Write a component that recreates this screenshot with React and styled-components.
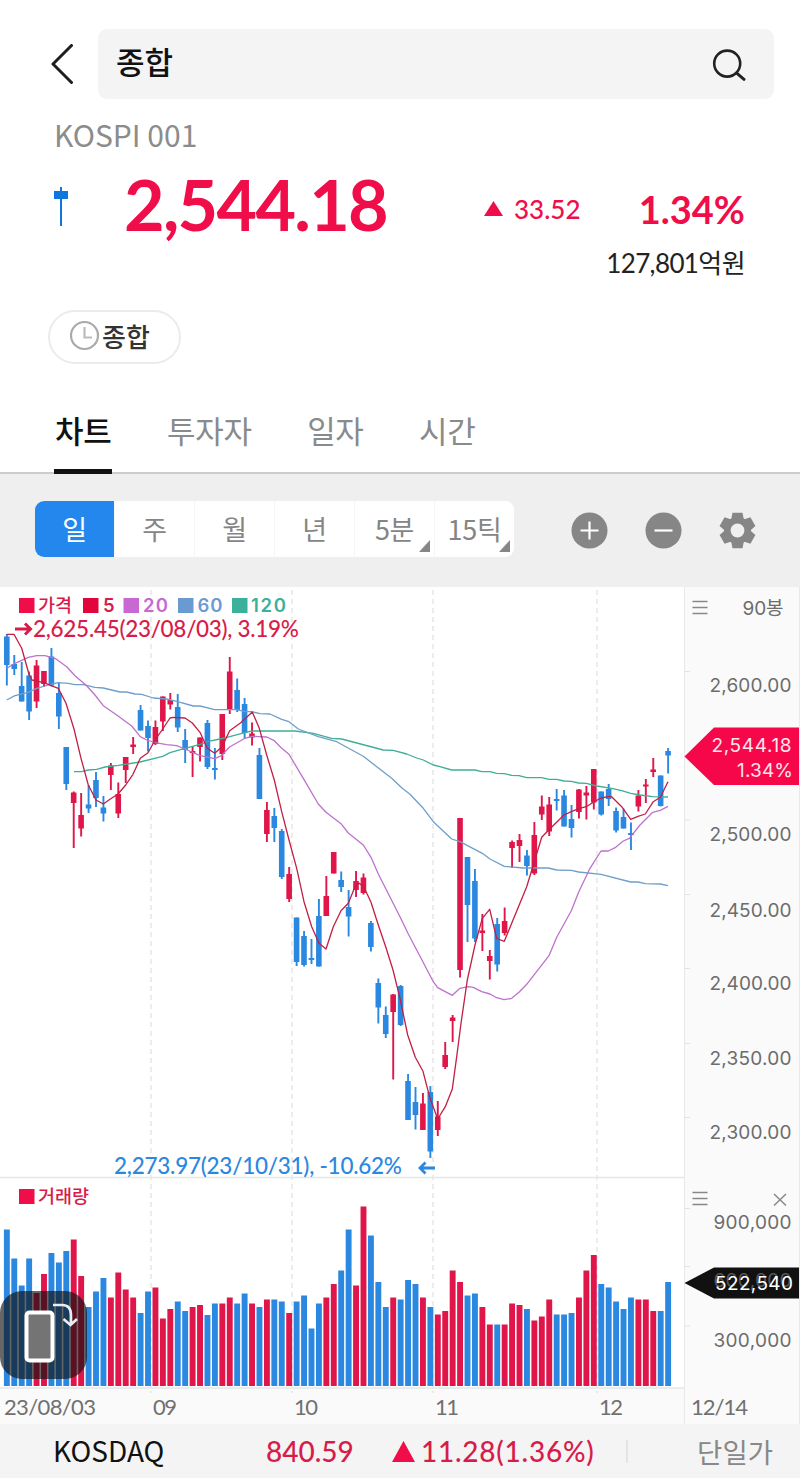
import React from "react";
import styled, { createGlobalStyle } from "styled-components";

const RED = "#ef0e4a";
const BLUE = "#2b88e0";
const KR = `"Noto Sans CJK KR", sans-serif`;
const LATO = `Lato, "Noto Sans CJK KR", sans-serif`;
const INTER = `Inter, "Noto Sans CJK KR", sans-serif`;

// r/b, high, body top, body bottom, low, top of the volume bar
const candles = [
  ["b", 634, 636.5, 665, 685.5, 1229.5],
  ["b", 655, 664, 669, 675, 1258.5],
  ["b", 662, 686, 701.5, 701.5, 1285.5],
  ["b", 671.5, 675.5, 711.5, 720, 1258.5],
  ["r", 660, 665.5, 701.5, 708, 1293],
  ["r", 671, 671, 684, 687, 1274],
  ["b", 648, 656.5, 685.5, 686.5, 1253],
  ["b", 683, 693, 716.5, 729, 1262.5],
  ["b", 747, 747, 784, 790, 1251],
  ["r", 791.5, 792.5, 803, 848, 1239.5],
  ["r", 793, 815, 828.5, 836.5, 1276],
  ["b", 785, 804.5, 808.5, 813, 1307],
  ["b", 772, 780, 798, 807, 1291.5],
  ["b", 796, 807.5, 813.5, 821.5, 1278],
  ["r", 763, 765.5, 775, 790, 1297.5],
  ["r", 782.5, 794, 813.5, 818, 1272.5],
  ["r", 757, 757, 770, 783, 1289.5],
  ["r", 737, 744.5, 747, 754, 1297.5],
  ["b", 705, 710, 730.5, 730.5, 1313],
  ["b", 720.5, 726, 738, 751.5, 1291.5],
  ["r", 720.5, 727, 744, 745, 1287.5],
  ["r", 696.5, 696.5, 721.5, 731, 1318.5],
  ["r", 693, 700, 704.5, 709.5, 1309],
  ["b", 694, 707, 727.5, 732, 1301.5],
  ["b", 729, 740, 750, 763, 1311],
  ["r", 746, 751, 753, 777, 1307],
  ["r", 737.5, 737.5, 747, 761.5, 1305],
  ["b", 720, 723, 767, 769, 1315],
  ["b", 748, 768, 770, 779.5, 1303.5],
  ["r", 714, 714, 754, 760, 1303.5],
  ["r", 657, 671.5, 710, 714, 1297.5],
  ["b", 678.5, 690, 710, 712, 1303.5],
  ["b", 698, 704, 733, 738.5, 1293.5],
  ["r", 722.5, 733.5, 737.5, 745.5, 1303.5],
  ["b", 748, 755, 799, 799, 1307],
  ["r", 802, 810, 834, 842, 1299.5],
  ["b", 808, 816, 828, 842, 1299.5],
  ["b", 829, 831, 877, 879, 1301.5],
  ["r", 867, 874, 899, 902, 1313],
  ["b", 917.5, 917.5, 962, 966, 1301.5],
  ["b", 931, 936, 965, 966.5, 1295.5],
  ["b", 939, 958, 960, 964, 1328.5],
  ["b", 899, 916, 966.5, 966.5, 1303.5],
  ["r", 876, 896, 916, 916, 1297.5],
  ["r", 852, 852, 873.5, 873.5, 1284],
  ["b", 871.5, 880, 887, 892, 1270.5],
  ["b", 890, 907, 916.5, 936.5, 1229.5],
  ["r", 871, 881, 890, 897, 1285.5],
  ["r", 873.5, 877.5, 893, 894.5, 1206.5],
  ["b", 921, 923, 947, 951.5, 1235.5],
  ["b", 978.5, 983, 1007.5, 1023.5, 1282],
  ["b", 1006.5, 1015, 1034, 1038, 1307],
  ["r", 994, 994.5, 1012, 1079.5, 1297.5],
  ["b", 985, 986, 1025, 1026, 1299.5],
  ["b", 1074, 1081, 1120, 1120, 1280],
  ["b", 1087, 1102, 1115, 1129.5, 1284],
  ["r", 1093, 1103.5, 1130, 1130, 1297.5],
  ["b", 1086, 1092, 1151.5, 1158, 1307],
  ["r", 1101, 1116.5, 1130, 1136, 1314.5],
  ["r", 1042, 1055, 1067, 1069, 1311],
  ["r", 1015, 1017.5, 1021, 1042, 1270.5],
  ["r", 818, 818, 970, 977.5, 1282],
  ["b", 857, 857, 905, 942, 1295.5],
  ["b", 869, 881, 938.5, 942, 1293.5],
  ["r", 914, 930.5, 933, 951, 1307],
  ["r", 950, 956, 961, 979.5, 1324.5],
  ["b", 918, 924, 964.5, 971.5, 1324.5],
  ["r", 907.5, 921, 933, 935.5, 1324.5],
  ["r", 840.5, 842, 848, 868, 1303.5],
  ["r", 834, 840, 846, 862, 1305],
  ["b", 850, 855.5, 866, 875.5, 1309],
  ["r", 822, 835, 873.5, 875, 1320.5],
  ["r", 795.5, 806.5, 814.5, 820, 1316.5],
  ["r", 797, 804.5, 831.5, 836, 1299.5],
  ["b", 789, 799, 801, 810.5, 1314.5],
  ["b", 790, 795.5, 826.5, 826.5, 1314.5],
  ["b", 805, 819, 828, 837.5, 1313],
  ["r", 789, 789.5, 812, 818.5, 1297.5],
  ["r", 786, 792.5, 795.5, 819.5, 1270.5],
  ["r", 769, 769, 802.5, 809.5, 1255],
  ["b", 791.5, 791.5, 814.5, 815.5, 1284],
  ["b", 784, 789, 799, 806, 1287.5],
  ["b", 807.5, 811, 830.5, 832.5, 1301.5],
  ["b", 808.5, 817, 828.5, 828.5, 1309],
  ["b", 822.5, 833, 835, 850, 1297.5],
  ["r", 790, 795.5, 806.5, 811.5, 1299.5],
  ["r", 779, 784.5, 786.5, 803, 1299.5],
  ["r", 758, 769.5, 772, 777, 1311],
  ["b", 775.5, 775.5, 806, 806.5, 1311],
  ["b", 748, 751, 755.5, 773.5, 1282],
];

const averages = [
  {
    color: "#3fae97",
    points:
      "74,771.7 81.7,771.7 88.3,770 96.7,769.3 105,767 118.3,765.3 140,762 162.7,756.3 170,752.7 185,748.3 200,744.3 208.3,741.3 220,739 229.7,736.7 245,732.7 251.7,731 295,731 313.3,733.3 331.7,738.3 341.7,739 383.3,750 393.3,750.3 406.7,754 416.7,758 423.3,760 433.3,765 440,766.7 451.7,770 475,770 481.7,771.7 490,771.7 496.7,773.3 504.3,773.7 511.7,775.3 519,775.7 526.7,777.7 541.7,777.7 549,779.3 556.7,779.3 564,781 571.3,781.3 578.7,783 586.3,783.3 596.7,786 611.7,788.3 621.7,790.7 630.7,793.3 640,795 652.7,796.7 668,797",
  },
  {
    color: "#6f9fc9",
    points:
      "6.7,700 15,695.7 28.3,692.3 36.7,688.3 51.7,684 58.3,682.7 68.3,683.3 75,684.7 83.3,684.7 95,687.3 103.3,688 120,692 126.7,692 135,694 141.7,694.3 153.3,698 166.7,699 176.7,701.3 193.3,706 200,706 214.7,709.7 236.7,709.7 245,711.7 251.7,711.7 260,713.7 270,714 281.7,719.3 289,721.7 298.3,729 318.3,736.7 336.7,741.7 363.3,756.3 391.7,778.3 401.7,787.7 410,794.3 423.3,808.3 433.3,821.7 440,828 451.7,839 460,841.7 482.3,853.3 490,859 504.3,866.3 523.3,868 548.3,868 556.7,870 571.3,870.3 578.7,872 601,874.3 630.7,882 638,882 645.3,883.7 660.3,884 668,885.7",
  },
  {
    color: "#bd72cb",
    points:
      "6.7,668.3 15,663.3 28.3,657.3 36.7,655.7 45,655.7 55,658.3 66.7,666.7 75,675.7 86.7,685.7 95,695 103.3,705.7 116.7,715 131.7,726 140.3,736.7 146.7,740 155.3,742.7 166.7,744.7 176.7,745.7 185,749 200,755.7 214.7,758.7 222,755.3 229.5,747 245,738.3 251.7,736.3 266.7,737 274.3,740.7 281.7,748.3 289,754.3 303.3,778.3 318.3,804 326,812.3 341,823.7 348.3,833 363.3,845 371,857.3 378.3,874 400,916.7 408.3,934 416.7,950 433.3,981.7 437.7,987.7 452.3,995.3 460,988.3 468.3,986.7 473.3,987.3 481.7,991.7 490,994 496.7,997.7 504,999.7 511.7,998.3 519,992.3 526.7,984.3 549,955.7 556.7,937.3 571.3,910.7 578.7,892 590,868.3 601,851 608.3,851 615.7,847.3 623.3,841 629.3,838.3 640,825 652.7,812.3 660.3,810.3 668,806.3",
  },
  {
    color: "#c11f45",
    points:
      "6.7,634.3 14,634.3 21.7,648.3 29,674.3 32,680 43.7,682.7 58.3,688.3 66,703.3 74,729 81,758.3 88.3,785 96,800 103.3,804 110,799.3 118,794 125.7,785 133,774.3 140.3,758.3 148,752.7 155.3,739.7 162.7,729 170,718 173.3,717.3 185,718 192.3,723 200,732.3 207.3,748.3 214.7,753.3 222,746.7 229.7,730.7 240.7,722.7 252.3,712 259.3,728.3 266.7,755 274.3,780 281.7,811.7 289,840 296.7,868.3 304,901.7 311.7,926.7 319,943.3 326,949 333.3,926.7 341,910.7 348.3,903.3 355.7,885 359.3,883.3 364,887.3 371,902.3 378.3,925 385.7,946.7 393,970 400,998.3 407.7,1035 415.3,1057.3 423,1071.3 430,1098.3 437.7,1119 445.3,1106.7 452.3,1089 456.7,1056.7 461,1023.3 467.3,980 475,945 482.3,918.3 489.7,909.3 496.7,938.5 504.3,941.3 511.7,923.3 526.7,886.7 534.3,861.7 541.7,837.3 549,829.7 564,815 571.3,811.7 578.7,808.7 586.3,806.7 593.7,802 601,798 608.3,796.7 611.7,796.7 621.7,806.7 630.7,819.3 638,816.3 645.3,814 653.3,801.7 660.3,797.3 668,781.7",
  },
];

const months = [
  { x: 151, label: "09" },
  { x: 292, label: "10" },
  { x: 433, label: "11" },
  { x: 597, label: "12" },
];

const priceTicks = [
  [685, "2,600.00"],
  [834, "2,500.00"],
  [909.5, "2,450.00"],
  [983, "2,400.00"],
  [1058, "2,350.00"],
  [1132, "2,300.00"],
];

const legend = [
  { label: "가격", color: RED, text: "#d81c4a", x: 19, tx: 38, width: 34 },
  { label: "5", color: "#e2043b", text: "#d81c4a", x: 83, tx: 103, width: 12 },
  { label: "20", color: "#c768d3", text: "#c768d3", x: 123.5, tx: 143, width: 25 },
  { label: "60", color: "#6a9bd0", text: "#6a9bd0", x: 178, tx: 197.5, width: 25 },
  { label: "120", color: "#3bb09b", text: "#3bb09b", x: 232, tx: 251, width: 35 },
];

const GlobalStyle = createGlobalStyle`
  * {
    box-sizing: border-box;
  }
  body {
    margin: 0;
    background: #fff;
    font-family: ${KR};
  }
  button {
    border: 0;
    padding: 0;
    background: none;
    font: inherit;
    color: inherit;
  }
  svg {
    display: block;
    flex: none;
  }
`;

const Page = styled.div`
  width: 800px;
  height: 1478px;
  display: flex;
  flex-direction: column;
  overflow: hidden;
  background: #fff;
`;

const TopBar = styled.header`
  display: flex;
  align-items: center;
  gap: 24px;
  padding: 29px 26px 0 50px;
`;

const SearchBox = styled.div`
  flex: 1;
  height: 70px;
  display: flex;
  align-items: center;
  justify-content: space-between;
  padding: 0 26px 2px 18px;
  border-radius: 9px;
  background: #f4f4f4;
`;

const Keyword = styled.span`
  padding-bottom: 5px;
  font-size: 31px;
  font-weight: 500;
  color: #111;
`;

const Code = styled.div`
  height: 74px;
  padding-left: 54px;
  line-height: 70px;
  font-size: 30px;
  font-weight: 400;
  color: #8c8c8c;
`;

const Quote = styled.section`
  display: flex;
  align-items: center;
  height: 67px;
  padding: 0 55px 0 52px;
  color: ${RED};
  font-family: ${LATO};
`;

const Price = styled.div`
  width: 360px;
  margin-left: 54px;
  padding-bottom: 5px;
  font-size: 70px;
  font-weight: 700;
  letter-spacing: -1.7px;
  line-height: 62px;
`;

const Change = styled.div`
  display: flex;
  align-items: center;
  gap: 11px;
  padding-top: 5px;
  font-size: 26px;
  font-weight: 500;
`;

const Rate = styled.div`
  margin-left: auto;
  padding-top: 4px;
  font-size: 38px;
  font-weight: 700;
`;

const Amount = styled.div`
  height: 69px;
  padding: 5px 55px 0 0;
  text-align: right;
  line-height: 36px;
  font-family: ${LATO};
  font-size: 26px;
  letter-spacing: -0.6px;
  color: #222;
`;

const Chip = styled.button`
  width: 133px;
  height: 54px;
  margin: 1px 0 0 48px;
  display: flex;
  align-items: center;
  padding: 0 0 3px 19px;
  gap: 2px;
  border: 2px solid #ebebeb;
  border-radius: 27px;
  font-size: 26px;
  font-weight: 500;
  color: #333;
`;

const Tabs = styled.nav`
  display: flex;
  gap: 53.5px;
  height: 110px;
  padding: 0 54px;
  border-bottom: 2px solid #ccc;
`;

const Tab = styled.button`
  height: 110px;
  padding: 25px 1px 0;
  font-size: 31px;
  letter-spacing: -0.3px;
  font-weight: ${(p) => (p.$active ? 500 : 400)};
  color: ${(p) => (p.$active ? "#111" : "#8a8a8a")};
  border-bottom: 5px solid ${(p) => (p.$active ? "#111" : "transparent")};
`;

const Toolbar = styled.div`
  display: flex;
  align-items: flex-start;
  height: 113px;
  padding: 27px 43px 0 35px;
  background: #efefef;
`;

const Periods = styled.div`
  display: flex;
  width: 479px;
  height: 56px;
  border-radius: 9px;
  overflow: hidden;
  background: #fff;
`;

const Period = styled.button`
  position: relative;
  flex: 1;
  padding-bottom: 1px;
  font-size: 27px;
  letter-spacing: -0.3px;
  color: ${(p) => (p.$active ? "#fff" : "#858585")};
  background: ${(p) => (p.$active ? "#2387ee" : "#fff")};
  border-left: ${(p) => (p.$active ? 0 : "1px solid #f5f5f5")};
  ${(p) =>
    p.$more &&
    `&::after {
      content: "";
      position: absolute;
      right: 4px;
      bottom: 5px;
      border-left: 11px solid transparent;
      border-bottom: 12px solid #868686;
    }`}
`;

const Tools = styled.div`
  display: flex;
  gap: 37px;
  margin: 11px 0 0 57px;
`;

const ChartArea = styled.section`
  position: relative;
  display: flex;
  height: 837px;
`;

const RotateButton = styled.button`
  position: absolute;
  left: 0;
  top: 704px;
  width: 87px;
  height: 88px;
  border-radius: 22px;
  background: rgba(16, 16, 16, 0.64);
`;

const Footer = styled.footer`
  display: flex;
  align-items: center;
  height: 54px;
  padding: 0 27px 0 53px;
  background: #f4f4f4;
  font-family: ${LATO};
  font-size: 28px;
  font-weight: 500;
  color: #d81c4a;
`;

const Market = styled.span`
  width: 213px;
  padding-bottom: 2px;
  font-family: ${KR};
  font-size: 28px;
  font-weight: 400;
  color: #111;
`;

const Index = styled.span`
  width: 126px;
`;

const Diff = styled.span`
  width: 236px;
  height: 23px;
  display: flex;
  align-items: center;
  gap: 6px;
  letter-spacing: 0.75px;
  border-right: 2px solid #e4e4e4;
`;

const Single = styled.span`
  margin-left: auto;
  font-family: ${KR};
  font-size: 27.5px;
  font-weight: 400;
  color: #888;
`;

const barX = (i) => 6.8 + i * 7.43;

const Plot = () => (
  <svg width="684" height="837" viewBox="0 587 684 837">
    <rect x="0" y="1388" width="684" height="36" fill="#fafafa" />
    {months.map((m) => (
      <line key={m.x} x1={m.x} x2={m.x} y1="590" y2="1393" stroke="#e2e2e2" strokeWidth="1.3" strokeDasharray="5 4" />
    ))}
    <path d="M0 1177.5H684M0 1388H684" stroke="#e4e7e8" strokeWidth="1.3" />
    {candles.map(([kind, high, top, bottom, low], i) => (
      <g key={i} fill={kind === "r" ? "#e0164a" : BLUE}>
        <rect x={barX(i) - 0.9} y={high} width="1.9" height={low - high} />
        <rect x={barX(i) - 2.8} y={top} width="5.6" height={bottom - top} />
      </g>
    ))}
    {averages.map((a) => (
      <polyline key={a.color} points={a.points} fill="none" stroke={a.color} strokeWidth="1.3" strokeLinejoin="round" />
    ))}
    {candles.map(([kind, , , , , vol], i) => (
      <rect key={i} x={barX(i) - 2.9} y={vol} width="5.9" height={1386 - vol} fill={kind === "r" ? "#e0164a" : BLUE} />
    ))}
    <g fontFamily={INTER} fontSize="18.5" fontWeight="600">
      {legend.map((l) => (
        <g key={l.label}>
          <rect x={l.x} y="598" width="15.5" height="15" fill={l.color} />
          <text x={l.tx} y="612" fill={l.text} fontWeight={l.label === "가격" ? 500 : 600} textLength={l.width}>
            {l.label}
          </text>
        </g>
      ))}
      <rect x="19" y="1189" width="15.5" height="15" fill={RED} />
      <text x="38" y="1203" fill="#d81c4a" fontWeight="500" textLength="51">
        거래량
      </text>
    </g>
    <path d="M15 629H30M25 623.5L30.500 629L25 634.5" fill="none" stroke="#d81c4a" strokeWidth="3" />
    <path d="M435 1168H420M425.500 1162.500L420 1168L425.500 1173.500" fill="none" stroke={BLUE} strokeWidth="2.8" />
    <g fontFamily={LATO} fontSize="22.500" fontWeight="500">
      <text x="33" y="637" fill="#d81c4a" textLength="266">
        2,625.45(23/08/03), 3.19%
      </text>
      <text x="114" y="1174" fill={BLUE} textLength="288">
        2,273.97(23/10/31), -10.62%
      </text>
    </g>
    <g fontFamily={LATO} fontSize="22" fill="#707070">
      <text x="4" y="1415" textLength="92">
        23/08/03
      </text>
      {months.map((m) => (
        <text key={m.x} x={m.x + 2} y="1415" textLength="24">
          {m.label}
        </text>
      ))}
    </g>
  </svg>
);

const Axis = () => (
  <svg width="116" height="837" viewBox="684 587 116 837">
    <rect x="684" y="587" width="116" height="837" fill="#fafafa" />
    <path d="M684.5 587V1424M799.5 587V1424" stroke="#e9e9e9" />
    <path
      d="M684 671.500h6M684 820h6M684 894.500h6M684 968.500h6M684 1043.500h6M684 1117.500h6M684 1208.500h6M684 1266.500h6M684 1326h6"
      stroke="#e2e2e2"
    />
    <path d="M692.500 601.500h15M692.500 607.500h15M692.500 613.500h15M692.500 1192.500h15M692.500 1198.500h15M692.500 1204.500h15" stroke="#888" strokeWidth="1.4" />
    <path d="M774 1194L786 1205.500M786 1194L774 1205.500" stroke="#888" strokeWidth="1.5" />
    <g fontFamily={INTER} fontSize="19" fill="#6c6c6c">
      <text x="742.500" y="614.500" textLength="41">
        90봉
      </text>
      {priceTicks.map(([y, label]) => (
        <text key={label} x="709.500" y={y + 7} textLength="82">
          {label}
        </text>
      ))}
      <text x="713.500" y="1229" textLength="78">
        900,000
      </text>
      <text x="713.500" y="1347" textLength="78">
        300,000
      </text>
    </g>
    <path d="M684.500 756.500L714 727.500H799V785H714Z" fill="#f5074a" />
    <path d="M684.500 1283L714 1267.500H799V1298.500H714Z" fill="#111" />
    <g fontFamily={INTER} fontSize="19" fill="#fff">
      <text x="711.500" y="751.500" fill="#ffe5ec" textLength="80">
        2,544.18
      </text>
      <text x="737" y="776.500" fill="#ffe5ec" textLength="56">
        1.34%
      </text>
      {/* grid label that the current volume tag sits on */}
      <text x="713.500" y="1287" fill="#555" textLength="78">
        600,000
      </text>
      <text x="715" y="1290" textLength="78">
        522,540
      </text>
    </g>
    <text x="691" y="1415" fontFamily={LATO} fontSize="22" fill="#707070" textLength="57">
      12/14
    </text>
  </svg>
);

const Gear = () => (
  <svg width="37" height="37" viewBox="-18.500 -18.500 37 37">
    {[0, 60, 120, 180, 240, 300].map((deg) => (
      <path key={deg} d="M-6.500 -10L-5 -17.800H5L6.500 -10Z" fill="#868686" strokeLinejoin="round" transform={`rotate(${deg})`} />
    ))}
    <circle r="10.200" fill="none" stroke="#868686" strokeWidth="6.600" />
  </svg>
);

const App = () => (
  <Page>
    <GlobalStyle />
    <TopBar>
      <svg width="24" height="40" viewBox="0 0 24 40">
        <path d="M21.500 1.500L3 20L21.500 38.500" fill="none" stroke="#1d1d1d" strokeWidth="3" strokeLinecap="round" strokeLinejoin="round" />
      </svg>
      <SearchBox>
        <Keyword>종합</Keyword>
        <svg width="36" height="36" viewBox="0 0 36 36">
          <circle cx="15.200" cy="18.600" r="13" fill="none" stroke="#222" strokeWidth="2.600" />
          <path d="M24.700 28.200L32 34.300" stroke="#222" strokeWidth="3" strokeLinecap="round" />
        </svg>
      </SearchBox>
    </TopBar>
    <Code>KOSPI 001</Code>
    <Quote>
      <svg width="18" height="40" viewBox="0 0 18 40">
        <path d="M9 0V39" stroke="#0f76dd" strokeWidth="2" />
        <rect x="2" y="4" width="14" height="8" fill="#0f76dd" />
      </svg>
      <Price>2,544.18</Price>
      <Change>
        <svg width="19" height="16" viewBox="0 0 19 16">
          <path d="M9.500 0L19 15H0Z" fill={RED} />
        </svg>
        33.52
      </Change>
      <Rate>1.34%</Rate>
    </Quote>
    <Amount>127,801억원</Amount>
    <Chip>
      <svg width="31" height="31" viewBox="0 0 31 31">
        <circle cx="15.500" cy="15.500" r="13.500" fill="none" stroke="#aaa" strokeWidth="2.200" />
        <path d="M15.500 7V17.500H23" fill="none" stroke="#bbb" strokeWidth="2.200" />
      </svg>
      종합
    </Chip>
    <Tabs>
      <Tab $active>차트</Tab>
      <Tab>투자자</Tab>
      <Tab>일자</Tab>
      <Tab>시간</Tab>
    </Tabs>
    <Toolbar>
      <Periods>
        <Period $active>일</Period>
        <Period>주</Period>
        <Period>월</Period>
        <Period>년</Period>
        <Period $more>5분</Period>
        <Period $more>15틱</Period>
      </Periods>
      <Tools>
        <svg width="37" height="37" viewBox="0 0 37 37">
          <circle cx="18.500" cy="18.500" r="18" fill="#868686" />
          <path d="M9.500 18.500H27.500M18.500 9.500V27.500" stroke="#fff" strokeWidth="2.200" />
        </svg>
        <svg width="37" height="37" viewBox="0 0 37 37">
          <circle cx="18.500" cy="18.500" r="18" fill="#868686" />
          <path d="M9.500 18.500H27.500" stroke="#fff" strokeWidth="2.200" />
        </svg>
        <Gear />
      </Tools>
    </Toolbar>
    <ChartArea>
      <Plot />
      <Axis />
      <RotateButton>
        <svg width="87" height="88" viewBox="0 0 87 88">
          <rect x="26.500" y="21.500" width="26" height="48" rx="3" fill="#747474" stroke="#fff" strokeWidth="4" />
          <path d="M53 14H62Q71 14 71 24V33M63.500 28L70.500 34L77 28" fill="none" stroke="#e8eef2" strokeWidth="2.600" />
        </svg>
      </RotateButton>
    </ChartArea>
    <Footer>
      <Market>KOSDAQ</Market>
      <Index>840.59</Index>
      <Diff>
        <svg width="23" height="21" viewBox="0 0 23 21">
          <path d="M11.500 0L23 21H0Z" fill={RED} />
        </svg>
        11.28(1.36%)
      </Diff>
      <Single>단일가</Single>
    </Footer>
  </Page>
);

export default App;
